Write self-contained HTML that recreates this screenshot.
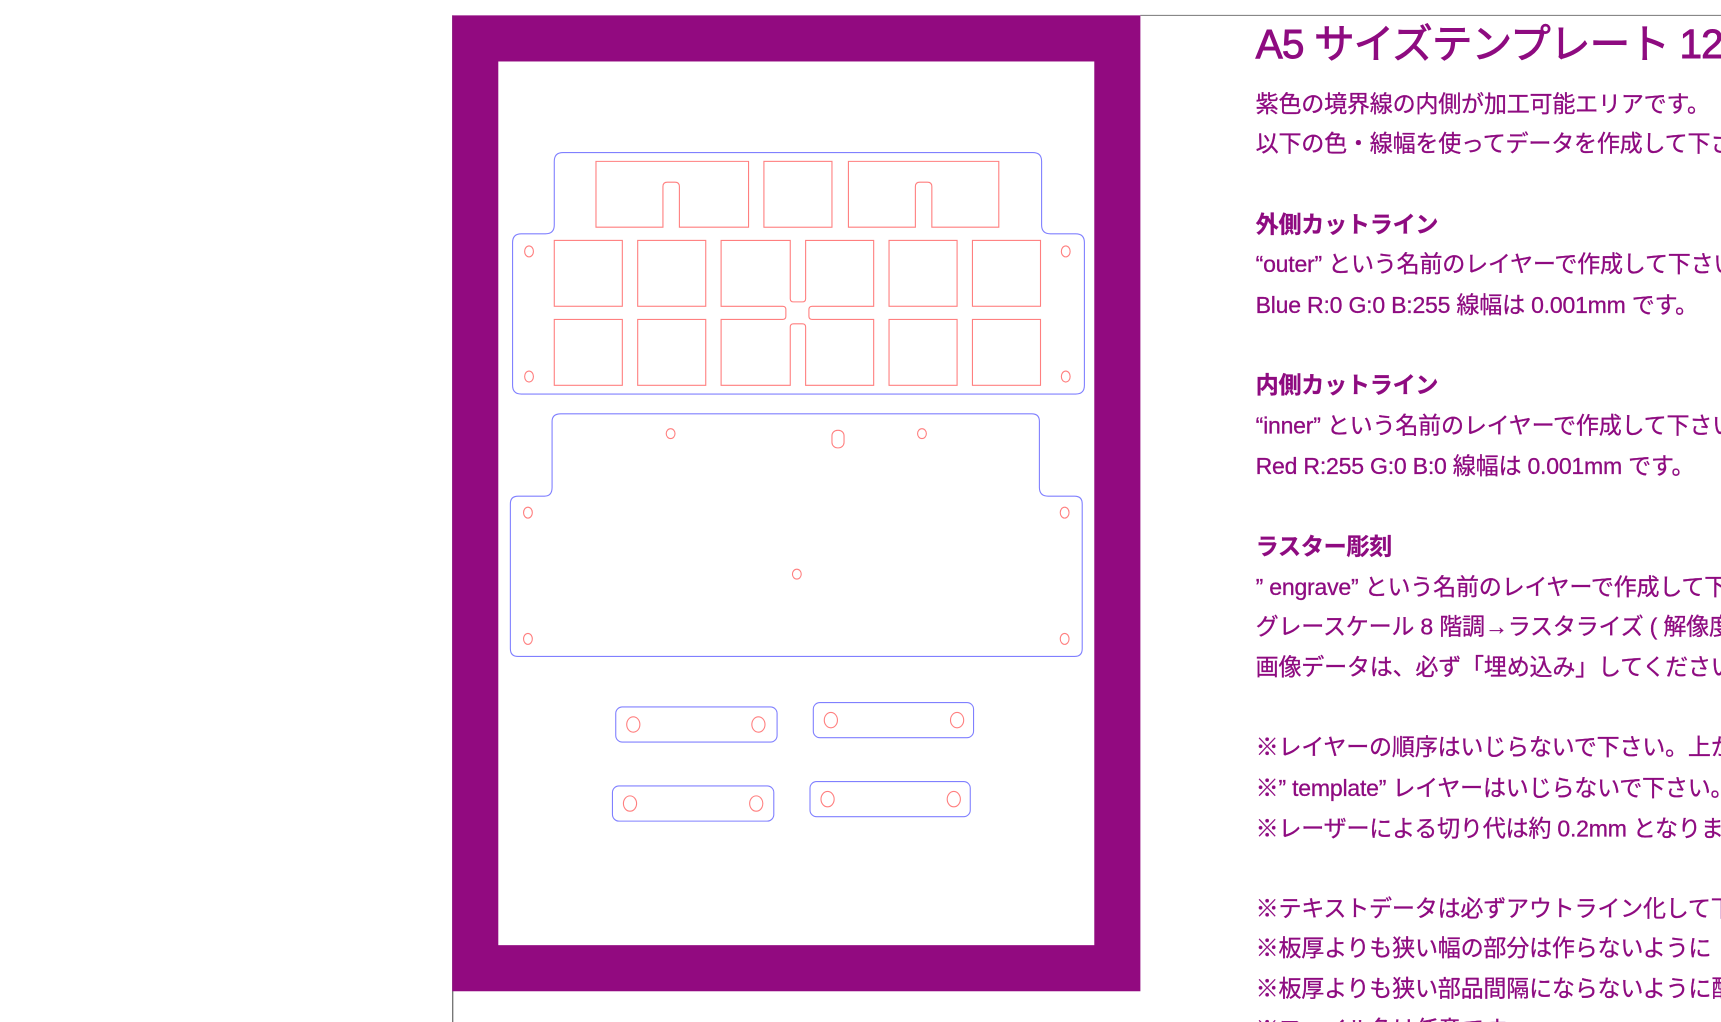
<!DOCTYPE html>
<html><head><meta charset="utf-8"><style>
html,body{margin:0;padding:0;background:#fff;overflow:hidden}
svg{display:block}
text{font-family:"Liberation Sans","Noto Sans CJK JP",sans-serif;fill:#8e0b80}
</style></head><body>
<svg width="1721" height="1022" viewBox="0 0 1568 931" preserveAspectRatio="none" xmlns="http://www.w3.org/2000/svg">
<rect width="1568" height="931" fill="#fff"/>
<line x1="1039" y1="14" x2="1568" y2="14" stroke="#777" stroke-width="1"/>
<line x1="412.5" y1="14" x2="412.5" y2="931" stroke="#555" stroke-width="1"/>
<rect x="412" y="14" width="627" height="889" fill="#920a80"/>
<rect x="454" y="56" width="543" height="805" fill="#fff"/>
<g fill="none" stroke="#8080ff" stroke-width="1">
<path d="M513,139 H941 Q949,139 949,147 V205 Q949,213 957,213 H980 Q988,213 988,221 V351 Q988,359 980,359 H475 Q467,359 467,351 V221 Q467,213 475,213 H497 Q505,213 505,205 V147 Q505,139 513,139Z"/>
<path d="M511,377 H940 Q947,377 947,384 V444 Q947,452 955,452 H979 Q986,452 986,459 V591 Q986,598 979,598 H472 Q465,598 465,591 V459 Q465,452 472,452 H496 Q503,452 503,444 V384 Q503,377 511,377Z"/>
<rect x="561" y="644" width="147" height="32" rx="6"/>
<rect x="741" y="640" width="146" height="32" rx="6"/>
<rect x="558" y="716" width="147" height="32" rx="6"/>
<rect x="738" y="712" width="146" height="32" rx="6"/>
</g>
<g fill="none" stroke="#ff7f7f" stroke-width="1">
<path d="M543,147 H682 V207 H619 V170 Q619,166 615,166 H608 Q604,166 604,170 V207 H543Z"/>
<rect x="696" y="147" width="62" height="60"/>
<path d="M773,147 H910 V207 H849 V170 Q849,166 845,166 H838 Q834,166 834,170 V207 H773Z"/>
<rect x="505" y="219" width="62" height="60"/><rect x="581" y="219" width="62" height="60"/>
<rect x="810" y="219" width="62" height="60"/><rect x="886" y="219" width="62" height="60"/>
<rect x="505" y="291" width="62" height="60"/><rect x="581" y="291" width="62" height="60"/>
<rect x="810" y="291" width="62" height="60"/><rect x="886" y="291" width="62" height="60"/>
<path d="M657,219 H720 V272 Q720,275 723,275 H731 Q734,275 734,272 V219 H796 V279 H740 Q737,279 737,282 V288 Q737,291 740,291 H796 V351 H734 V298 Q734,295 731,295 H723 Q720,295 720,298 V351 H657 V291 H713 Q716,291 716,288 V282 Q716,279 713,279 H657Z"/>
<ellipse cx="482" cy="229" rx="4" ry="5"/><ellipse cx="971" cy="229" rx="4" ry="5"/>
<ellipse cx="482" cy="343" rx="4" ry="5"/><ellipse cx="971" cy="343" rx="4" ry="5"/>
<ellipse cx="611" cy="395" rx="4" ry="4.5"/><ellipse cx="840" cy="395" rx="4" ry="4.5"/>
<rect x="758" y="392" width="11" height="16" rx="5"/>
<ellipse cx="726" cy="523" rx="4" ry="4.5"/>
<ellipse cx="481" cy="467" rx="4" ry="5"/><ellipse cx="970" cy="467" rx="4" ry="5"/>
<ellipse cx="481" cy="582" rx="4" ry="5"/><ellipse cx="970" cy="582" rx="4" ry="5"/>
<ellipse cx="577" cy="660" rx="6" ry="7"/><ellipse cx="691" cy="660" rx="6" ry="7"/>
<ellipse cx="757" cy="656" rx="6" ry="7"/><ellipse cx="872" cy="656" rx="6" ry="7"/>
<ellipse cx="574" cy="732" rx="6" ry="7"/><ellipse cx="689" cy="732" rx="6" ry="7"/>
<ellipse cx="754" cy="728" rx="6" ry="7"/><ellipse cx="869" cy="728" rx="6" ry="7"/>
</g>
<g font-size="21" letter-spacing="-0.2" stroke="#8e0b80" stroke-width="0.25">
<text x="1144" y="53" font-size="37" letter-spacing="-0.8" stroke-width="0.8">A5 サイズテンプレート 12</text>
<text x="1144" y="102">紫色の境界線の内側が加工可能エリアです。</text>
<text x="1144" y="138">以下の色・線幅を使ってデータを作成して下さい。</text>
<text x="1144" y="212" font-weight="bold">外側カットライン</text>
<text x="1144" y="248">“outer” という名前のレイヤーで作成して下さい。</text>
<text x="1144" y="285">Blue  R:0 G:0 B:255 線幅は 0.001mm です。</text>
<text x="1144" y="358" font-weight="bold">内側カットライン</text>
<text x="1144" y="395">“inner” という名前のレイヤーで作成して下さい。</text>
<text x="1144" y="432">Red   R:255 G:0 B:0 線幅は 0.001mm です。</text>
<text x="1144" y="505" font-weight="bold">ラスター彫刻</text>
<text x="1144" y="542">” engrave” という名前のレイヤーで作成して下さい。</text>
<text x="1144" y="578">グレースケール 8 階調→ラスタライズ ( 解像度</text>
<text x="1144" y="615">画像データは、必ず「埋め込み」してください。</text>
<text x="1144" y="688">※レイヤーの順序はいじらないで下さい。上から</text>
<text x="1144" y="725">※” template” レイヤーはいじらないで下さい。</text>
<text x="1144" y="762">※レーザーによる切り代は約 0.2mm となります。</text>
<text x="1144" y="835">※テキストデータは必ずアウトライン化して下さい。</text>
<text x="1144" y="871">※板厚よりも狭い幅の部分は作らないように</text>
<text x="1144" y="908">※板厚よりも狭い部品間隔にならないように配置</text>
<text x="1144" y="945">※ファイル名は任意です。</text>
</g>
</svg>
</body></html>
